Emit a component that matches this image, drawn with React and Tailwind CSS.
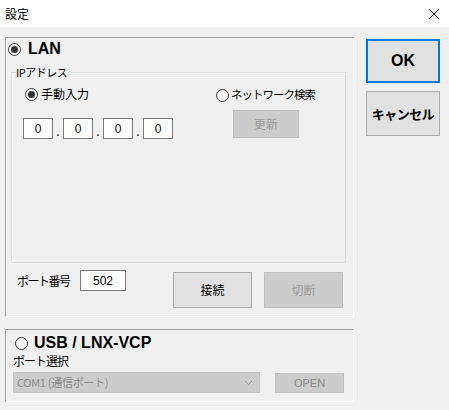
import React from "react";

const jp = { fontFamily: '"Noto Sans CJK JP", "Noto Sans", sans-serif' };
const lat = { fontFamily: '"Liberation Sans", "Noto Sans CJK JP", sans-serif' };

function Radio({ checked }) {
  return (
    <span className="w-[13px] h-[13px] rounded-full border border-[#333] bg-white flex items-center justify-center shrink-0">
      {checked && <span className="w-[7px] h-[7px] rounded-full bg-[#333]" />}
    </span>
  );
}

function IpBox() {
  return (
    <div
      className="w-[30px] h-[21px] border border-[#7a7a7a] bg-white flex items-center justify-center text-[12px] text-black"
      style={lat}
    >
      0
    </div>
  );
}

function Dot() {
  return <div className="w-[10px] h-[21px] flex items-end justify-center pb-[2px] text-[12px] leading-none">.</div>;
}

export default function App() {
  return (
    <div className="w-[449px] h-[410px] bg-[#f0f0f0] overflow-hidden" style={jp}>
      <div className="h-[27px] bg-white flex items-center justify-between pl-[5px] pr-[9px]">
        <span className="text-[12px] text-black">設定</span>
        <svg width="12" height="12" viewBox="0 0 12 12" stroke="#111" strokeWidth="1">
          <path d="M1 1L11 11M11 1L1 11" />
        </svg>
      </div>

      <div className="flex">
        <div className="ml-[5px] w-[349px]">
          {/* LAN */}
          <div className="mt-[10px] h-[280px] border-t border-l border-t-[#a0a0a0] border-l-[#a0a0a0] border-r border-b border-r-white border-b-white pt-[2px]">
            <div className="h-[18px] flex items-center pl-[2px] gap-[7px]">
              <Radio checked />
              <span className="text-[16px] font-bold text-black leading-none" style={lat}>LAN</span>
            </div>

            <div className="relative mt-[14px] ml-[5px] w-[335px] h-[191px] border border-[#dcdcdc] shadow-[inset_1px_1px_0_#fff]">
              <span className="absolute left-[4px] top-[-9px] bg-[#f0f0f0] text-[11px] leading-[16px] text-black pr-[1px] tracking-[-0.5px]">IPアドレス</span>
              <div className="flex">
                <div className="w-[190px]">
                  <div className="mt-[13px] ml-[13px] h-[16px] flex items-center gap-[3px]">
                    <Radio checked />
                    <span className="text-[12px] text-black">手動入力</span>
                  </div>
                  <div className="mt-[16px] ml-[11px] flex">
                    <IpBox />
                    <Dot />
                    <IpBox />
                    <Dot />
                    <IpBox />
                    <Dot />
                    <IpBox />
                  </div>
                </div>
                <div>
                  <div className="mt-[14px] ml-[14px] h-[16px] flex items-center gap-[2px]">
                    <Radio />
                    <span className="text-[11.5px] text-black tracking-[-1px] whitespace-nowrap">ネットワーク検索</span>
                  </div>
                  <div className="mt-[7px] ml-[31px] w-[66px] h-[28px] bg-[#cccccc] border border-[#bfbfbf] flex items-center justify-center text-[12px] text-[#9a9a9a]">
                    更新
                  </div>
                </div>
              </div>
            </div>

            <div className="flex mt-[7px]">
              <span className="ml-[11px] mt-[2px] w-[52px] text-[12px] text-black tracking-[-1.5px] whitespace-nowrap">ポート番号</span>
              <div
                className="ml-[11px] w-[46px] h-[21px] bg-white border border-[#7a7a7a] flex items-center justify-center text-[12px] text-black"
                style={lat}
              >
                502
              </div>
              <div className="ml-[47px] mt-[2px] w-[79px] h-[36px] bg-[#e1e1e1] border border-[#adadad] flex items-center justify-center text-[12px] text-black">
                接続
              </div>
              <div className="ml-[12px] mt-[2px] w-[79px] h-[36px] bg-[#cccccc] border border-[#bfbfbf] flex items-center justify-center text-[12px] text-[#9a9a9a]">
                切断
              </div>
            </div>
          </div>

          {/* USB */}
          <div className="mt-[12px] h-[73px] border-t border-l border-t-[#a0a0a0] border-l-[#a0a0a0] border-r border-b border-r-white border-b-white">
            <div className="h-[20px] mt-[3px] flex items-center pl-[9px] gap-[6px]">
              <Radio />
              <span className="text-[16px] font-bold text-black leading-none" style={lat}>USB / LNX-VCP</span>
            </div>
            <div className="ml-[7px] text-[12px] leading-[16px] text-black tracking-[-1px]">ポート選択</div>
            <div className="flex mt-[3px]">
              <div className="ml-[7px] w-[247px] h-[21px] bg-[#cccccc] border border-[#c4c4c4] flex items-center justify-between pl-[3px] pr-[6px]">
                <span className="text-[11px] text-[#8a8a8a] tracking-[-0.3px]">COM1 (通信ポート)</span>
                <svg width="9" height="6" viewBox="0 0 9 6" fill="none" stroke="#9a9a9a" strokeWidth="1">
                  <path d="M1 1L4.5 4.5L8 1" />
                </svg>
              </div>
              <div
                className="ml-[15px] w-[69px] h-[20px] mt-[1px] bg-[#cccccc] border border-[#bfbfbf] flex items-center justify-center text-[11px] text-[#8a8a8a]"
                style={lat}
              >
                OPEN
              </div>
            </div>
          </div>
        </div>

        <div className="ml-[12px] mt-[12px] flex flex-col gap-[8px]">
          <div className="w-[74px] h-[44px] bg-[#e1e1e1] border-2 border-[#0078d7] flex items-center justify-center text-[16px] font-bold text-black" style={lat}>
            OK
          </div>
          <div className="w-[74px] h-[45px] bg-[#e1e1e1] border border-[#adadad] flex items-center justify-center text-[13px] font-bold text-black tracking-[-0.5px]">
            キャンセル
          </div>
        </div>
      </div>
    </div>
  );
}
